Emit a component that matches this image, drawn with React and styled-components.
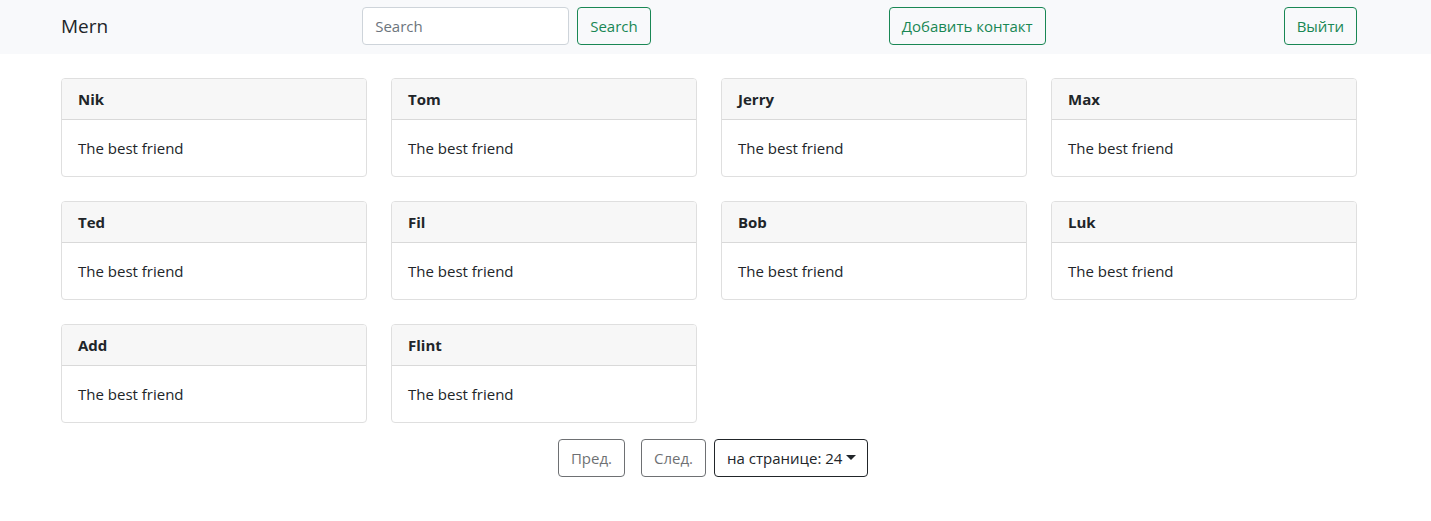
import React from "react";
import styled, { createGlobalStyle } from "styled-components";

const GlobalStyle = createGlobalStyle`
  *, *::before, *::after { box-sizing: border-box; }
  body {
    margin: 0;
    background: #fff;
    color: #212529;
    font-family: "Segoe UI", "Open Sans", "Noto Sans", sans-serif;
    font-size: 15px;
    line-height: 24px;
  }
`;

const Navbar = styled.header`
  padding: 7px 0 9px;
  background: #f8f9fb;
`;

const Container = styled.div`
  width: 100%;
  max-width: 1333px;
  margin: 0 auto;
  padding: 0 25px 0 12px;
`;

const NavRow = styled(Container)`
  display: flex;
  align-items: center;
  justify-content: space-between;
`;

const Brand = styled.a`
  margin-right: 16px;
  color: #212529;
  font-size: 19px;
  line-height: 30px;
  text-decoration: none;
`;

const SearchForm = styled.form`
  display: flex;
  gap: 8px;
`;

const SearchInput = styled.input`
  width: 207px;
  height: 38px;
  padding: 6px 12px;
  border: 1px solid #ced4da;
  border-radius: 4px;
  background: #fff;
  color: #212529;
  font: inherit;

  &::placeholder {
    color: #6c757d;
    opacity: 1;
  }
`;

const tones = { success: "#198754", dark: "#212529" };

const Button = styled.button`
  height: 38px;
  padding: 6px 12px;
  border: 1px solid ${({ $tone }) => tones[$tone]};
  border-radius: 4px;
  background: transparent;
  color: ${({ $tone }) => tones[$tone]};
  font: inherit;
  white-space: nowrap;
  cursor: pointer;

  &:disabled {
    opacity: 0.65;
    cursor: default;
  }
`;

const CardGrid = styled.main`
  display: grid;
  grid-template-columns: repeat(4, minmax(0, 1fr));
  gap: 24px;
  margin-top: 24px;

  @media (max-width: 900px) {
    grid-template-columns: repeat(2, minmax(0, 1fr));
  }
`;

const Card = styled.article`
  overflow: hidden;
  border: 1px solid #dfdfdf;
  border-radius: 4px;
  background: #fff;
`;

const CardTitle = styled.h2`
  margin: 0;
  padding: 8px 16px;
  border-bottom: 1px solid #d9d9d9;
  background: #f7f7f7;
  font-size: 15px;
  line-height: 24px;
  font-weight: 700;
`;

const CardText = styled.p`
  margin: 0;
  padding: 16px;
`;

const Pagination = styled.nav`
  display: flex;
  justify-content: center;
  gap: 8px;
  margin: 16px 0;
  padding-left: 8px;
`;

const PageSteps = styled.div`
  display: flex;
  gap: 16px;
`;

const SelectWrap = styled.div`
  position: relative;
`;

const PageSize = styled.select`
  height: 38px;
  padding: 6px 24px 6px 12px;
  border: 1px solid #212529;
  border-radius: 4px;
  background: transparent;
  color: #212529;
  font: inherit;
  appearance: none;
  cursor: pointer;
`;

const Caret = styled.svg`
  position: absolute;
  top: 16px;
  right: 12px;
  pointer-events: none;
`;

const contacts = ["Nik", "Tom", "Jerry", "Max", "Ted", "Fil", "Bob", "Luk", "Add", "Flint"];

export default function App() {
  return (
    <>
      <GlobalStyle />
      <Navbar>
        <NavRow>
          <Brand href="#">Mern</Brand>
          <SearchForm onSubmit={(e) => e.preventDefault()}>
            <SearchInput type="search" placeholder="Search" aria-label="Search" />
            <Button type="submit" $tone="success">Search</Button>
          </SearchForm>
          <Button type="button" $tone="success">Добавить контакт</Button>
          <Button type="button" $tone="success">Выйти</Button>
        </NavRow>
      </Navbar>
      <Container>
        <CardGrid>
          {contacts.map((name) => (
            <Card key={name}>
              <CardTitle>{name}</CardTitle>
              <CardText>The best friend</CardText>
            </Card>
          ))}
        </CardGrid>
        <Pagination>
          <PageSteps>
            <Button type="button" $tone="dark" disabled>Пред.</Button>
            <Button type="button" $tone="dark" disabled>След.</Button>
          </PageSteps>
          <SelectWrap>
            <PageSize aria-label="Контактов на странице" defaultValue="24">
              <option value="12">на странице: 12</option>
              <option value="24">на странице: 24</option>
              <option value="48">на странице: 48</option>
            </PageSize>
            <Caret width="10" height="5" viewBox="0 0 10 5" aria-hidden="true">
              <path d="M0 0h10L5 5z" fill="#212529" />
            </Caret>
          </SelectWrap>
        </Pagination>
      </Container>
    </>
  );
}
